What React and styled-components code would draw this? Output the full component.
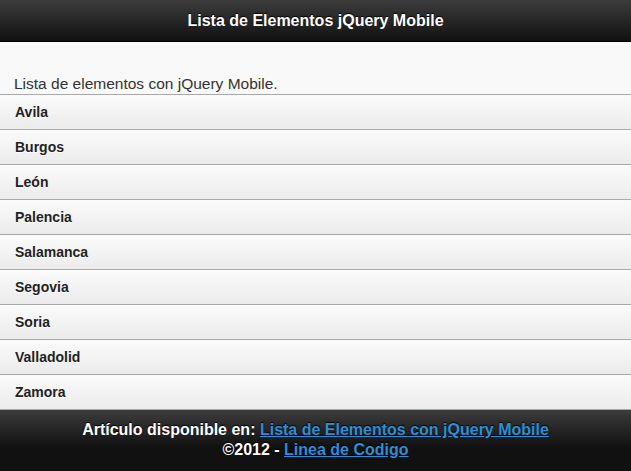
import React from "react";
import styled, { createGlobalStyle } from "styled-components";

const GlobalStyle = createGlobalStyle`
  html, body {
    margin: 0;
    padding: 0;
    background: #f9f9f9;
    font-family: "Liberation Sans", Arial, Helvetica, sans-serif;
  }
`;

const Page = styled.div({
  display: "flex",
  flexDirection: "column",
  minHeight: "100vh",
  background: "#f9f9f9",
});

const Header = styled.header({
  height: "42px",
  boxSizing: "border-box",
  display: "flex",
  alignItems: "center",
  justifyContent: "center",
  background: "linear-gradient(#3c3c3c, #111)",
  borderBottom: "1px solid #000",
});

const Title = styled.h1({
  margin: 0,
  fontSize: "16px",
  fontWeight: "bold",
  color: "#fff",
  textShadow: "0 -1px 1px #000",
});

const Content = styled.main({
  paddingTop: "32px",
});

const Intro = styled.p({
  margin: 0,
  padding: "0 14px",
  fontSize: "15.5px",
  lineHeight: "20px",
  color: "#333",
});

const List = styled.ul({
  listStyle: "none",
  margin: 0,
  padding: 0,
});

const Item = styled.li({
  height: "35px",
  boxSizing: "border-box",
  display: "flex",
  alignItems: "center",
  padding: "0 15px 1px",
  borderTop: "1px solid #a8a8a8",
  background: "linear-gradient(#fbfbfb, #ebebeb)",
  fontSize: "14px",
  fontWeight: "bold",
  color: "#222",
  textShadow: "0 1px 0 #fff",
});

const Footer = styled.footer({
  flex: 1,
  padding: "10px 0 12px",
  borderTop: "1px solid #a8a8a8",
  background: "linear-gradient(#3c3c3c, #111 60%)",
  textAlign: "center",
  fontSize: "16px",
  fontWeight: "bold",
  lineHeight: "20px",
  color: "#fff",
  textShadow: "0 -1px 1px #000",
  "& a": {
    color: "#2e8fd6",
  },
});

const cities = [
  "Avila",
  "Burgos",
  "León",
  "Palencia",
  "Salamanca",
  "Segovia",
  "Soria",
  "Valladolid",
  "Zamora",
];

function App() {
  return (
    <Page>
      <GlobalStyle />
      <Header>
        <Title>Lista de Elementos jQuery Mobile</Title>
      </Header>
      <Content>
        <Intro>Lista de elementos con jQuery Mobile.</Intro>
        <List>
          {cities.map((city) => (
            <Item key={city}>{city}</Item>
          ))}
        </List>
      </Content>
      <Footer>
        <div>
          Artículo disponible en: <a href="#">Lista de Elementos con jQuery Mobile</a>
        </div>
        <div>
          ©2012 - <a href="#">Linea de Codigo</a>
        </div>
      </Footer>
    </Page>
  );
}

export default App;
